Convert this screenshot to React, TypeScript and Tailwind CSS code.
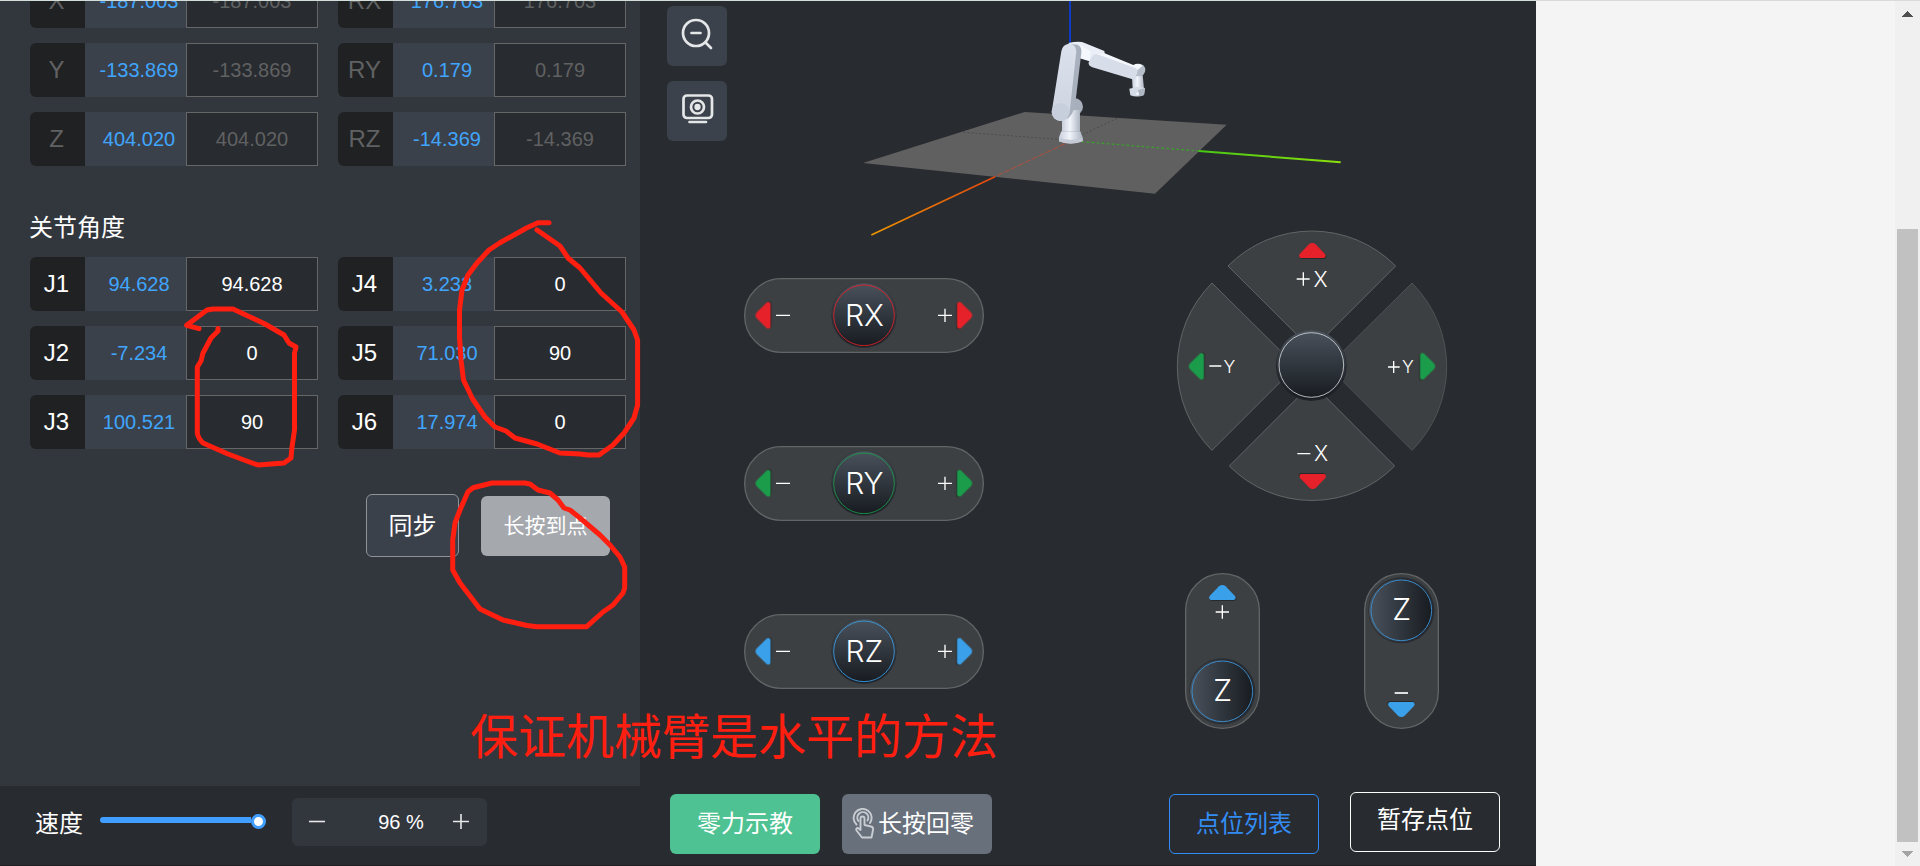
import React from 'react';

type Axis = { name: string; value: string; target: string };

const pose: Axis[] = [
  { name: 'X', value: '-187.003', target: '-187.003' },
  { name: 'RX', value: '176.703', target: '176.703' },
  { name: 'Y', value: '-133.869', target: '-133.869' },
  { name: 'RY', value: '0.179', target: '0.179' },
  { name: 'Z', value: '404.020', target: '404.020' },
  { name: 'RZ', value: '-14.369', target: '-14.369' },
];

const joints: Axis[] = [
  { name: 'J1', value: '94.628', target: '94.628' },
  { name: 'J4', value: '3.233', target: '0' },
  { name: 'J2', value: '-7.234', target: '0' },
  { name: 'J5', value: '71.030', target: '90' },
  { name: 'J3', value: '100.521', target: '90' },
  { name: 'J6', value: '17.974', target: '0' },
];

function AxisGrid({ items, disabled }: { items: Axis[]; disabled?: boolean }) {
  return (
    <div className="grid grid-cols-[288px_288px] gap-x-5 gap-y-[15px]">
      {items.map((a) => (
        <div key={a.name} className="flex h-[54px]">
          <div
            className={`flex w-[55px] items-center justify-center rounded-l-md bg-[#202122] pr-[2px] text-[24px] ${
              disabled ? 'text-[#606162]' : 'text-white'
            }`}
          >
            {a.name}
          </div>
          <div className="flex w-[101px] items-center justify-center bg-[#3b414b] pl-[7px] text-[20px] text-[#40a5fc]">
            {a.value}
          </div>
          <div
            className={`flex w-[132px] items-center justify-center border border-[#666] bg-[#282b2f] text-[20px] ${
              disabled ? 'text-[#606162]' : 'text-white'
            }`}
          >
            {a.target}
          </div>
        </div>
      ))}
    </div>
  );
}

function Arrow({ x, y, rotate, color }: { x: number; y: number; rotate: number; color: string }) {
  return (
    <path
      transform={`translate(${x} ${y}) rotate(${rotate})`}
      d="M-10 -19 Q0 -27 10 -19 L38 10 Q43 19 34 22 L-34 22 Q-43 19 -38 10 Z"
      fill={color}
      filter="drop-shadow(2px 3px 2px rgba(0,0,0,.35))"
    />
  );
}

function RotatePad({ label, color }: { label: string; color: string }) {
  return (
    <svg width="240" height="75" viewBox="0 0 720 225" className="block">
      <defs>
        <linearGradient id={`k${label}`} x1="0" y1="0" x2="0" y2="1">
          <stop offset="0" stopColor="#4a525c" />
          <stop offset="1" stopColor="#171b20" />
        </linearGradient>
      </defs>
      <rect x="2" y="2" width="716" height="221" rx="110" fill="#3d4042" stroke="#626466" strokeWidth="4" />
      <Arrow x={58} y={112} rotate={-90} color={color} />
      <Arrow x={661} y={112} rotate={90} color={color} />
      <path d="M96 112H138M582 112H624M603 92V132" stroke="#fff" strokeWidth="4" />
      <circle cx="360" cy="112" r="98" fill="#282c32" />
      <circle cx="360" cy="111" r="96" fill={`url(#k${label})`} />
      <circle cx="360" cy="112" r="91" fill="none" stroke={color} strokeWidth="3" opacity=".85" />
      <text x="361" y="143" textAnchor="middle" fontSize="90" fontWeight="300" fill="#fff" className="font-['Inter','Liberation_Sans',sans-serif]">
        {label}
      </text>
    </svg>
  );
}

function LiftPad({ up }: { up?: boolean }) {
  const cy = up ? 355 : 112;
  const id = up ? 'liftUp' : 'liftDown';
  return (
    <svg width="75" height="156" viewBox="0 0 225 468" className="block">
      <defs>
        <linearGradient id={id}>
          <stop offset="0" stopColor="#4a525c" />
          <stop offset="1" stopColor="#171b20" />
        </linearGradient>
      </defs>
      <rect x="2" y="2" width="221" height="464" rx="110" fill="#3d4042" stroke="#626466" strokeWidth="4" />
      {up ? (
        <>
          <Arrow x={112} y={59} rotate={0} color="#3aa0e9" />
          <path d="M92 117H132M112 97V137" stroke="#fff" strokeWidth="4" />
        </>
      ) : (
        <>
          <Arrow x={112} y={409} rotate={180} color="#3aa0e9" />
          <path d="M92 360H132" stroke="#fff" strokeWidth="5" />
        </>
      )}
      <circle cx="112" cy={cy} r="99" fill="#282c32" />
      <circle cx="110" cy={cy} r="95" fill={`url(#${id})`} />
      <circle cx="112" cy={cy} r="91" fill="none" stroke="#3a8ac8" strokeWidth="3" />
      <text x="113" y={cy + 28} textAnchor="middle" fontSize="91" fontWeight="300" fill="#fff" className="font-['Inter','Liberation_Sans',sans-serif]">
        Z
      </text>
    </svg>
  );
}

function Dial() {
  return (
    <svg width="300" height="280" viewBox="0 30 900 840" className="block">
      <defs>
        <linearGradient id="dialKnob" x1="0" y1="0" x2="0" y2="1">
          <stop offset="0" stopColor="#4a525c" />
          <stop offset="1" stopColor="#171b20" />
        </linearGradient>
      </defs>
      <g fill="#3d4042" stroke="#626466" strokeWidth="3" strokeLinejoin="round">
        <path d="M204 138A354 354 0 0 1 707 138L456 389Z" />
        <path d="M156 189A355 355 0 0 0 156 691L408 439Z" />
        <path d="M208 738A349 349 0 0 0 704 738L456 490Z" />
        <path d="M756 189A355 355 0 0 1 756 691L504 439Z" stroke="#505254" />
      </g>
      <circle cx="454" cy="437" r="106" fill="#20242a" />
      <circle cx="454" cy="434" r="104" fill="url(#dialKnob)" />
      <circle cx="454" cy="435" r="97" fill="none" stroke="#d5d7d9" strokeWidth="2.5" />
      <Arrow x={457} y={92} rotate={0} color="#e62129" />
      <Arrow x={458} y={784} rotate={180} color="#e62129" />
      <Arrow x={110} y={439} rotate={-90} color="#1a9c4b" />
      <Arrow x={802} y={439} rotate={90} color="#1a9c4b" />
      <path d="M410 177H449M430 157V197M412 701H451M148 438H184M684 441H719M701 423V459" stroke="#fff" strokeWidth="4" />
      <g fill="#fff" textAnchor="middle" fontWeight="300" className="font-['Inter','Liberation_Sans',sans-serif]">
        <text x="482" y="200" fontSize="64">X</text>
        <text x="483" y="723" fontSize="64">X</text>
        <text x="208" y="460" fontSize="53">Y</text>
        <text x="744" y="460" fontSize="53">Y</text>
      </g>
    </svg>
  );
}

function RobotScene() {
  return (
    <svg width="520" height="240" viewBox="0 0 1560 720" className="block shrink-0">
      <defs>
        <linearGradient id="xAxis" x1="1" y1="0" x2="0" y2="1">
          <stop offset="0" stopColor="#e0460f" />
          <stop offset="1" stopColor="#ef9500" />
        </linearGradient>
        <linearGradient id="yAxis">
          <stop offset="0" stopColor="#46c814" />
          <stop offset="1" stopColor="#8cdf0c" />
        </linearGradient>
        <linearGradient id="column">
          <stop offset="0" stopColor="#c9cfdb" />
          <stop offset=".45" stopColor="#f0f4fb" />
          <stop offset="1" stopColor="#adb4c1" />
        </linearGradient>
        <linearGradient id="arm" x1="0" y1="0" x2="0" y2="1">
          <stop offset="0" stopColor="#dbe2ed" />
          <stop offset="1" stopColor="#cdd4e0" />
        </linearGradient>
      </defs>
      <path d="M39 489L524 336L1130 374L915 581Z" fill="#606060" />
      <path d="M340 397L640 419M698 404L803 354" stroke="#454748" strokeWidth="2.5" strokeDasharray="6 6" fill="none" />
      <path d="M645 431L435 530" stroke="#b0503c" strokeWidth="3" strokeDasharray="18 5" />
      <path d="M435 530L64 705" stroke="url(#xAxis)" strokeWidth="5" />
      <path d="M695 425L1046 453" stroke="#3d9f2d" strokeWidth="4" strokeDasharray="8 7" />
      <path d="M1046 453L1472 487" stroke="url(#yAxis)" strokeWidth="6" />
      <path d="M660 0V134" stroke="#0b3fe0" strokeWidth="5" />
      <circle cx="674" cy="320" r="25" fill="#a8afbc" />
      <path d="M636 330H690V394H636Z" fill="url(#column)" />
      <path d="M634 394H691L698 412V424Q662 437 627 424V412Z" fill="url(#column)" />
      <path d="M627 414Q662 424 698 414V424Q662 437 627 424Z" fill="#c4cbd7" />
      <path d="M655 129Q690 121 704 129L763 153L765 165L723 184L684 172Z" fill="#e9eef7" />
      <path d="M690 136L722 154L719 184L684 173Z" fill="#f4f7fd" />
      <path d="M655 131L682 134Q696 139 694 158L675 318Q669 344 650 358Z" fill="#a9b1be" />
      <path d="M634 154Q637 133 658 131Q679 134 679 154L659 336Q650 362 631 363Q606 359 605 336Z" fill="url(#arm)" />
      <circle cx="632" cy="336" r="27" fill="#c7cfdc" />
      <path d="M846 230L878 225L882 266H848Z" fill="url(#column)" />
      <circle cx="867" cy="210" r="19" fill="#b5bdca" />
      <path d="M733 163L764 160L850 195Q865 187 878 197L862 211Z" fill="#f4f7fc" />
      <path d="M730 165Q737 160 746 164L858 205Q865 211 861 220L855 240L727 202Q714 197 716 187Z" fill="#d7deea" />
      <path d="M838 266L864 260L885 264L882 285Q862 294 841 286Z" fill="#d5dce7" />
      <path d="M864 270L885 264L882 285L866 289Z" fill="#aeb6c3" />
      <circle cx="863" cy="281" r="4" fill="#f6f8fc" />
    </svg>
  );
}

function ToolButton({ children }: { children: React.ReactNode }) {
  return (
    <button className="flex size-[60px] items-center justify-center rounded-md bg-[#3b424b]">
      <svg width="60" height="60" viewBox="0 0 60 60" fill="none" stroke="#e4e6e8" strokeWidth="2.7" strokeLinecap="round">
        {children}
      </svg>
    </button>
  );
}

function Annotations() {
  return (
    <div className="pointer-events-none absolute inset-0">
      <svg width="1536" height="866" viewBox="0 0 1536 866" fill="none" stroke="#ff1f10" strokeWidth="5" strokeLinecap="round" strokeLinejoin="round" className="block">
        <path d="M549 222.7H538L526.5 228 514 235 499.6 243 489 250 477 263 468 275 462 290 459.5 310V337L461 360 463.5 380 472.6 399 485 417 495 427 506 431 515 438 537 444 560 453 580 454 588 455H599L613 445 624 433 634 418 637.6 405V340L634 330 622 312 601 293 580 268 568 258 560 246 537 230" />
        <path d="M199 328.7L186.6 325.3 207 310 213 309H233L265 324 284 335 289 343 296 347 294.5 353V430L292 447 291 458 284 463 258 465 244 460 228 454 203 443Q198 438 197.3 433V367L201 361 203 353 211 338 218 331V328.5" />
        <path d="M492 483L473 487.7 468 491.7 460 510 455 523 452.7 540V570L460 583 480 609 503 620 527 625.5 537 626.7H586.7L603 612 613 605 623 593 624.7 588V567L620 557 610 545 600 535 580 518 570 510 564 508 558 500 550 493 538 490 530 484 525 483Z" />
      </svg>
      <div className="absolute left-[470px] top-[708px] whitespace-nowrap text-[48px] leading-[60px] text-[#ff1f10]">
        保证机械臂是水平的方法
      </div>
    </div>
  );
}

export default function App() {
  return (
    <div className="relative flex h-[866px] w-[1920px] overflow-hidden bg-[#f4f4f4] font-['Liberation_Sans','Noto_Sans_CJK_SC',sans-serif]">
      <div className="flex w-[1536px] shrink-0 flex-col bg-[#282b2f]">
        <div className="flex h-[786px]">
          <aside className="h-full w-[640px] shrink-0 overflow-hidden bg-[#32363d] px-[30px]">
            <div className="-mt-[26px]">
              <AxisGrid items={pose} disabled />
            </div>
            <h2 className="mt-[44px] mb-[11px] -ml-px text-[24px] leading-9 text-white">关节角度</h2>
            <AxisGrid items={joints} />
            <div className="mt-[45px] ml-[336px] flex items-center gap-[22px] text-white">
              <button className="h-[63px] w-[93px] rounded-md border border-[#8f9399] bg-[#3b414b] text-[24px]">同步</button>
              <button className="h-[60px] w-[129px] rounded-md bg-[#a5a8ad] text-[21px]">长按到点</button>
            </div>
          </aside>
          <main className="flex w-[896px] flex-col">
            <div className="flex h-[230px]">
              <div className="flex w-[210px] flex-col gap-[15px] pt-[6px] pl-[27px]">
                <ToolButton>
                  <circle cx="29" cy="27" r="13" />
                  <path d="M24.500 27H33.500M38.500 36.500L44 42" />
                </ToolButton>
                <ToolButton>
                  <rect x="16.500" y="14.500" width="28.500" height="22.500" rx="3.500" />
                  <circle cx="30.500" cy="26" r="6.500" />
                  <circle cx="30.500" cy="26" r="1.800" fill="#fff" />
                  <path d="M22.500 41H39" />
                </ToolButton>
              </div>
              <RobotScene />
            </div>
            <div className="flex">
              <div className="flex w-[520px] flex-col gap-[93px] pt-[48px] pl-[104px]">
                <RotatePad label="RX" color="#e62129" />
                <RotatePad label="RY" color="#1a9c4b" />
                <RotatePad label="RZ" color="#3aa0e9" />
              </div>
              <div className="flex flex-col gap-[63px]">
                <Dial />
                <div className="flex gap-[104px] pl-[25px]">
                  <LiftPad up />
                  <LiftPad />
                </div>
              </div>
            </div>
          </main>
        </div>
        <footer className="flex h-20 items-start border-b border-[#1d1f22] text-[24px] text-white">
          <span className="mt-[20px] ml-[35px] w-[65px] leading-9">速度</span>
          <div className="mt-[28px] flex h-[15px] w-[166px] items-center">
            <div className="mb-[3px] h-[6px] w-[151px] rounded-l-full bg-[#409eff]" />
            <div className="size-[15px] rounded-full border-[3px] border-[#409eff] bg-white" />
          </div>
          <div className="mt-[12px] ml-[26px] flex h-[48px] w-[195px] items-center rounded-md bg-[#32363d] pr-[18px] pl-[17px]">
            <svg width="16" height="18" viewBox="0 0 16 18" stroke="#e8e8e8" strokeWidth="1.600"><path d="M0 8.500H16" /></svg>
            <span className="flex-1 pl-[36px] text-center text-[20px]">96 %</span>
            <svg width="16" height="18" viewBox="0 0 16 18" stroke="#e8e8e8" strokeWidth="1.600" className="ml-[12px]"><path d="M0 8.500H16M8 1V16" /></svg>
          </div>
          <button className="mt-[8px] ml-[183px] h-[60px] w-[150px] rounded-md bg-[#4ec292]">零力示教</button>
          <button className="mt-[8px] ml-[22px] flex h-[60px] w-[150px] items-center rounded-md bg-[#68707c] pl-[10px]">
            <svg width="26" height="32" viewBox="0 0 26 32" fill="none" stroke="#c9cdd2" strokeWidth="1.900" strokeLinecap="round" strokeLinejoin="round">
              <path d="M4.500 16.500A9 9 0 1 1 18 15" />
              <path d="M6.500 13A5.500 5.500 0 1 1 15.500 12.500" />
              <path d="M8.500 22V10.500Q8.500 8.500 10.500 8.500T12.500 10.500V17L19 18.500Q21.500 19 21 22L19.500 29.500H10L4.500 22.500Q3.500 20 6 20Z" />
            </svg>
            <span>长按回零</span>
          </button>
          <button className="mt-[8px] ml-[177px] h-[60px] w-[150px] rounded-md border border-[#338cf4] text-[#338cf4]">点位列表</button>
          <button className="mt-[6px] ml-[31px] h-[60px] w-[150px] rounded-md border border-white pb-[4px]">暂存点位</button>
        </footer>
      </div>
      <div className="ml-auto flex w-[25px] flex-col items-center bg-[#f0f0f0] pt-[11px]">
        <svg width="11" height="6" viewBox="0 0 11 6" shapeRendering="crispEdges"><path d="M0 6L5.500 0L11 6Z" fill="#505050" /></svg>
        <div className="mt-[212px] h-[613px] w-[21px] bg-[#c1c1c1]" />
        <svg width="11" height="6" viewBox="0 0 11 6" shapeRendering="crispEdges" className="mt-[9px]"><path d="M0 0L5.500 6L11 0Z" fill="#a3a3a3" /></svg>
      </div>
      <Annotations />
      <div className="absolute inset-x-0 top-0 flex h-px">
        <div className="w-[1536px] bg-[#d3dedb]" />
        <div className="flex-1 bg-[#dadada]" />
      </div>
    </div>
  );
}
